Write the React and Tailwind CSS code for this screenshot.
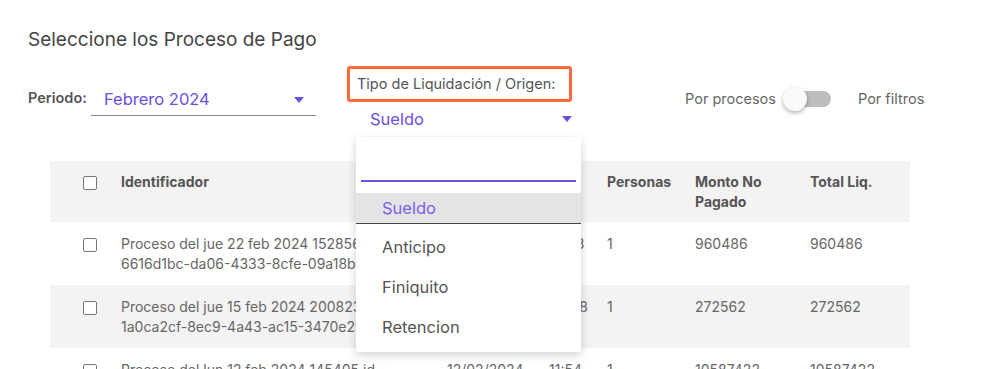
const rows = [
  {
    id: 'Proceso del jue 22 feb 2024 152856 id',
    uuid: '6616d1bc-da06-4333-8cfe-09a18b7c2e41',
    fecha: '22/02/2024',
    hora: '15:28',
    personas: '1',
    monto: '960486',
    total: '960486',
  },
  {
    id: 'Proceso del jue 15 feb 2024 200823 id',
    uuid: '1a0ca2cf-8ec9-4a43-ac15-3470e29b1d05',
    fecha: '15/02/2024',
    hora: '20:08',
    personas: '1',
    monto: '272562',
    total: '272562',
  },
  {
    id: 'Proceso del lun 12 feb 2024 145405 id',
    uuid: 'c41e7d0a-22f3-4b8e-9e1a-7f06d2a1b3c9',
    fecha: '12/02/2024',
    hora: '11:54',
    personas: '1',
    monto: '10587422',
    total: '10587422',
  },
];

const cols = 'grid grid-cols-[71px_326px_102px_58px_88px_115px_100px]';

const Checkbox = () => (
  <span className="block w-[14px] h-[14px] border border-[#767676] rounded-[2px] bg-white" />
);

const Caret = () => (
  <svg width="10" height="6" viewBox="0 0 10 6">
    <path d="M0 0 L10 0 L5 6 Z" fill="#6b4fe3" />
  </svg>
);

const Dropdown = () => {
  const options = ['Anticipo', 'Finiquito', 'Retencion'];
  return (
    <div className="absolute left-[356px] top-[137px] w-[225px] bg-white shadow-[0_3px_10px_rgba(0,0,0,0.18)] rounded-[2px] pb-[5px]">
      {/* search */}
      <div className="px-[5px] pt-[43px]">
        <div className="h-[2px] bg-[#6b4fe3]" />
      </div>
      <div className="mt-[11px] h-[31px] bg-[#e4e4e4] border-b border-[#444] flex items-center pl-[26px] text-[16.5px] text-[#7a5ff0]">
        Sueldo
      </div>
      <div className="mt-[3px]">
        {options.map((o) => (
          <div key={o} className="h-[40px] flex items-center pl-[26px] text-[16.5px] text-[#555]">
            {o}
          </div>
        ))}
      </div>
    </div>
  );
};

export default function App() {
  return (
    <div className="relative w-[1003px] h-[369px] overflow-hidden bg-white font-['Inter',sans-serif] text-[#555]">
      <h1 className="pl-[28px] pt-[28px] text-[19px] leading-[24px] text-[#444]">
        Seleccione los Proceso de Pago
      </h1>

      {/* Filters */}
      <div className="flex items-start pl-[28px] mt-[14px] h-[95px]">
        <div className="w-[63px] mt-[22px] text-[14.5px] leading-[20px] font-semibold text-[#555]">
          Periodo:
        </div>
        <div className="w-[225px] mt-[18px] h-[32px] border-b border-[#8a8a8a] flex items-center justify-between pl-[13px] pr-[12px]">
          <span className="text-[16.5px] text-[#6b4fe3]">Febrero 2024</span>
          <Caret />
        </div>

        <div className="ml-[31px] w-[225px]">
          <div className="h-[36px] border-[3px] border-[#ff6a3d] rounded-[3px] flex items-center pl-[7px] text-[14.5px] text-[#555]">
            Tipo de Liquidación / Origen:
          </div>
          <div className="h-[34px] flex items-center justify-between pl-[23px]">
            <span className="text-[16.5px] text-[#6b4fe3]">Sueldo</span>
            <Caret />
          </div>
        </div>

        <div className="ml-[113px] mt-[23px] flex items-center h-[20px] text-[14.5px] text-[#666]">
          <span>Por procesos</span>
          <div className="relative ml-[7px] w-[48px] h-[24px] flex items-center">
            <div className="absolute left-[8px] w-[40px] h-[16px] rounded-full bg-[#bdbdbd]" />
            <div className="absolute left-0 w-[24px] h-[24px] rounded-full bg-[#fafafa] shadow-[0_2px_4px_rgba(0,0,0,0.3)]" />
          </div>
          <span className="ml-[27px]">Por filtros</span>
        </div>
      </div>

      {/* Table */}
      <div className="ml-[50px] w-[860px]">
        <div className={`${cols} h-[61px] bg-[#f3f3f3] text-[14px] leading-[20px] font-bold text-[#555]`}>
          <div className="pl-[33px] pt-[15px]"><Checkbox /></div>
          <div className="pt-[11px]">Identificador</div>
          <div className="pt-[11px]">Fecha</div>
          <div className="pt-[11px]">Hora</div>
          <div className="pt-[11px]">Personas</div>
          <div className="pt-[11px]">Monto No<br />Pagado</div>
          <div className="pt-[11px]">Total Liq.</div>
        </div>
        {rows.map((r, i) => (
          <div
            key={r.uuid}
            className={`${cols} h-[63px] text-[14px] leading-[20px] text-[#666] ${i % 2 === 1 ? 'bg-[#f3f3f3]' : 'bg-white'}`}
          >
            <div className="pl-[33px] pt-[16px]"><Checkbox /></div>
            <div className="pt-[12px] whitespace-nowrap overflow-hidden">
              {r.id}
              <br />
              {r.uuid}
            </div>
            <div className="pt-[12px]">{r.fecha}</div>
            <div className="pt-[12px]">{r.hora}</div>
            <div className="pt-[12px]">{r.personas}</div>
            <div className="pt-[12px]">{r.monto}</div>
            <div className="pt-[12px]">{r.total}</div>
          </div>
        ))}
      </div>

      <Dropdown />
    </div>
  );
}
